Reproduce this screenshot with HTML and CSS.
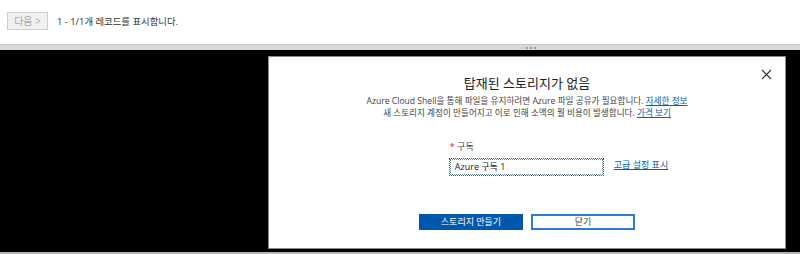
FILE: index.html
```html
<!DOCTYPE html>
<html lang="ko">
<head>
    <meta charset="UTF-8">
    <title>Cloud Shell</title>
    <link rel="stylesheet" href="styles.css">
</head>
<body>
    <div class="pager">
        <button class="pager-btn" disabled>다음 &gt;</button>
        <span class="pager-text">1 - 1/1개 레코드를 표시합니다.</span>
    </div>

    <div class="splitter">
        <span class="grip"></span><span class="grip"></span><span class="grip"></span>
    </div>

    <div class="shell">
        <div class="dialog">
            <button class="close" aria-label="닫기">
                <svg width="11" height="11" viewBox="0 0 11 11">
                    <path d="M1 1L10 10M10 1L1 10" stroke="#333" stroke-width="1.1" fill="none"/>
                </svg>
            </button>
            <h1 class="title">탑재된 스토리지가 없음</h1>
            <p class="desc">Azure Cloud Shell을 통해 파일을 유지하려면 Azure 파일 공유가 필요합니다. <a href="#">자세한 정보</a></p>
            <p class="desc">새 스토리지 계정이 만들어지고 이로 인해 소액의 월 비용이 발생합니다. <a href="#">가격 보기</a></p>

            <div class="form">
                <label class="label"><span class="req">*</span> 구독</label>
                <div class="field-row">
                    <div class="select">Azure 구독 1</div>
                    <a href="#" class="adv">고급 설정 표시</a>
                </div>
            </div>

            <div class="actions">
                <button class="btn primary">스토리지 만들기</button>
                <button class="btn secondary">닫기</button>
            </div>
        </div>
    </div>
</body>
</html>
```

FILE: styles.css
```css
* {
    margin: 0;
    padding: 0;
    box-sizing: border-box;
}

body {
    font-family: 'Segoe UI', 'Open Sans', 'Noto Sans CJK KR', sans-serif;
    width: 800px;
    height: 254px;
    overflow: hidden;
    background: #fff;
}

.pager {
    height: 44px;
    display: flex;
    align-items: center;
    padding: 0 0 2px 7px;
}

.pager-btn {
    width: 41px;
    height: 18px;
    background: #f0f0f0;
    border: 1px solid #cfcfcf;
    color: #a8a8a8;
    font-family: inherit;
    font-size: 10px;
    line-height: 16px;
}

.pager-text {
    margin-left: 9px;
    font-size: 9.4px;
    color: #333;
}

.splitter {
    height: 6px;
    background: #d9d9d9;
    border-top: 1px solid #c8c8c8;
    display: flex;
    justify-content: center;
    align-items: center;
    gap: 2px;
    padding-left: 262px;
}

.grip {
    width: 2px;
    height: 2px;
    background: #9a9a9a;
}

.shell {
    height: 204px;
    background: #000;
    border-bottom: 2px solid #b5b5b5;
    padding: 6px 14px 0 268px;
}

.dialog {
    position: relative;
    width: 518px;
    height: 193px;
    background: #fff;
    border: 1px solid #8a8a8a;
    display: flex;
    flex-direction: column;
    align-items: center;
    padding-top: 17px;
}

.close {
    position: absolute;
    top: 12px;
    right: 12px;
    width: 12px;
    height: 12px;
    border: none;
    background: none;
    display: flex;
}

.title {
    font-size: 13px;
    font-weight: normal;
    color: #222;
    line-height: 18px;
    margin-bottom: 3px;
}

.desc {
    font-size: 8.6px;
    line-height: 12px;
    color: #444;
}

.desc a, .adv {
    color: #0062ad;
    text-decoration: underline;
}

.form {
    margin-top: 22px;
    margin-left: 63px;
    display: flex;
    flex-direction: column;
    align-self: center;
}

.label {
    font-size: 9px;
    color: #444;
    line-height: 12px;
    margin-left: 1px;
}

.req {
    color: #e0141e;
}

.field-row {
    margin-top: 5px;
    display: flex;
    align-items: center;
    gap: 10px;
}

.select {
    width: 155px;
    height: 18px;
    border: 1px dotted #3c5a66;
    outline: 1px dotted #6a8794;
    outline-offset: -2px;
    font-size: 9px;
    color: #222;
    line-height: 16px;
    padding-left: 5px;
}

.adv {
    font-size: 9px;
    margin-top: -6px;
}

.actions {
    margin-top: auto;
    margin-bottom: 18px;
    display: flex;
    gap: 8px;
}

.btn {
    width: 104px;
    height: 16px;
    font-family: inherit;
    font-size: 9px;
    line-height: 12px;
}

.primary {
    background: #0058ad;
    border: 1px solid #0058ad;
    color: #fff;
}

.secondary {
    background: #fff;
    border: 2px solid #2b7cd3;
    color: #444;
}
```
